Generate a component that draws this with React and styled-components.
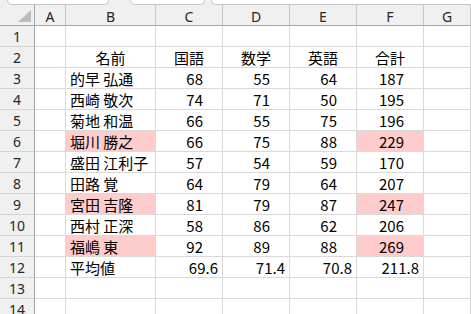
import React from 'react';
import styled, { createGlobalStyle } from 'styled-components';

const GlobalStyle = createGlobalStyle`
  html, body {
    margin: 0;
    padding: 0;
    background: #ffffff;
  }
  body {
    font-family: "Noto Sans CJK JP", "Noto Sans", sans-serif;
  }
`;

const students = [
  { name: '的早 弘通', kokugo: 68, sugaku: 55, eigo: 64, total: 187 },
  { name: '西崎 敬次', kokugo: 74, sugaku: 71, eigo: 50, total: 195 },
  { name: '菊地 和温', kokugo: 66, sugaku: 55, eigo: 75, total: 196 },
  { name: '堀川 勝之', kokugo: 66, sugaku: 75, eigo: 88, total: 229, hot: true },
  { name: '盛田 江利子', kokugo: 57, sugaku: 54, eigo: 59, total: 170 },
  { name: '田路 覚', kokugo: 64, sugaku: 79, eigo: 64, total: 207 },
  { name: '宮田 吉隆', kokugo: 81, sugaku: 79, eigo: 87, total: 247, hot: true },
  { name: '西村 正深', kokugo: 58, sugaku: 86, eigo: 62, total: 206 },
  { name: '福嶋 東', kokugo: 92, sugaku: 89, eigo: 88, total: 269, hot: true },
];

const columns = ['A', 'B', 'C', 'D', 'E', 'F', 'G'];

// 平均値の行
const average = ['69.6', '71.4', '70.8', '211.8'];

export default function App() {
  const rows = [];

  // 1行目は空
  rows.push([{}, {}, {}, {}, {}, {}, {}]);

  // 見出し
  rows.push([
    {},
    { text: '名前', align: 'center' },
    { text: '国語', align: 'center' },
    { text: '数学', align: 'center' },
    { text: '英語', align: 'center' },
    { text: '合計', align: 'center' },
    {},
  ]);

  students.forEach((s) => {
    rows.push([
      {},
      { text: s.name, align: 'left', fill: s.hot },
      { text: s.kokugo, align: 'right', pad: 19 },
      { text: s.sugaku, align: 'right', pad: 19 },
      { text: s.eigo, align: 'right', pad: 19 },
      { text: s.total, align: 'right', pad: 19, fill: s.hot },
      {},
    ]);
  });

  rows.push([
    {},
    { text: '平均値', align: 'left' },
    ...average.map((v) => ({ text: v, align: 'right', pad: 4 })),
    {},
  ]);

  rows.push([{}, {}, {}, {}, {}, {}, {}]);
  rows.push([{}, {}, {}, {}, {}, {}, {}]);

  return (
    <>
      <GlobalStyle />
      <Page>
        <TopStrip>
          <FieldBox $w={100} $left={7} />
          <FieldBox $w={73} $left={21} />
          <FieldBox $grow $left={6} />
        </TopStrip>

        <Sheet>
          <Corner>
            <CornerMark />
          </Corner>
          {columns.map((c) => (
            <ColHeader key={c}>{c}</ColHeader>
          ))}

          {rows.map((row, i) => (
            <React.Fragment key={i}>
              <RowHeader>{i + 1}</RowHeader>
              {row.map((cell, j) => (
                <Cell
                  key={j}
                  $align={cell.align}
                  $fill={cell.fill}
                  $pad={cell.pad}
                >
                  {cell.text}
                </Cell>
              ))}
            </React.Fragment>
          ))}
        </Sheet>
      </Page>
    </>
  );
}

const Page = styled.div`
  width: 471px;
  height: 314px;
  overflow: hidden;
  background: #f0f0f0;
  display: flex;
  flex-direction: column;
`;

const TopStrip = styled.div`
  height: 12px;
  display: flex;
  align-items: flex-start;
  background: #f0f0f0;
`;

const FieldBox = styled.div`
  margin-left: ${(p) => p.$left}px;
  width: ${(p) => (p.$grow ? 'auto' : p.$w + 'px')};
  flex: ${(p) => (p.$grow ? 1 : 'none')};
  height: 4px;
  background: #ffffff;
  border: 1px solid #c4c4c4;
  border-top: none;
  border-radius: 0 0 5px 5px;
  ${(p) => (p.$grow ? 'border-right: none; border-radius: 0 0 0 5px;' : '')}
`;

const Sheet = styled.div`
  display: grid;
  grid-template-columns: 35px 31px 90px 67px 67px 67px 67px 1fr;
  grid-auto-rows: 21px;
  background: #ffffff;
`;

const Corner = styled.div`
  position: relative;
  background: #f0f0f0;
  border-right: 1px solid #a6a6a6;
  border-bottom: 1px solid #a6a6a6;
`;

const CornerMark = styled.div`
  position: absolute;
  right: 3px;
  bottom: 3px;
  width: 0;
  height: 0;
  border-left: 13px solid transparent;
  border-bottom: 12px solid #bcbcbc;
`;

const ColHeader = styled.div`
  background: #f0f0f0;
  border-right: 1px solid #c8c8c8;
  border-bottom: 1px solid #a6a6a6;
  font-family: "Noto Sans", "Liberation Sans", sans-serif;
  font-size: 14px;
  color: #262626;
  display: flex;
  align-items: center;
  justify-content: center;
  padding-top: 2px;
  box-sizing: border-box;
`;

const RowHeader = styled.div`
  background: #f0f0f0;
  border-right: 1px solid #a6a6a6;
  border-bottom: 1px solid #d4d4d4;
  font-family: "Noto Sans", "Liberation Sans", sans-serif;
  font-size: 14px;
  color: #262626;
  display: flex;
  align-items: center;
  justify-content: center;
  padding-top: 1px;
  box-sizing: border-box;
`;

const Cell = styled.div`
  background: ${(p) => (p.$fill ? '#ffcccc' : '#ffffff')};
  border-right: 1px solid #d9d9d9;
  border-bottom: 1px solid #d9d9d9;
  font-family: "Noto Sans CJK JP", "Noto Sans", sans-serif;
  font-size: 15px;
  color: #000000;
  display: flex;
  align-items: center;
  white-space: nowrap;
  box-sizing: border-box;
  padding-top: 1px;
  justify-content: ${(p) =>
    p.$align === 'center' ? 'center' : p.$align === 'right' ? 'flex-end' : 'flex-start'};
  padding-left: ${(p) => (p.$align === 'left' ? '4px' : '0')};
  padding-right: ${(p) => (p.$pad ? p.$pad + 'px' : '0')};
`;
